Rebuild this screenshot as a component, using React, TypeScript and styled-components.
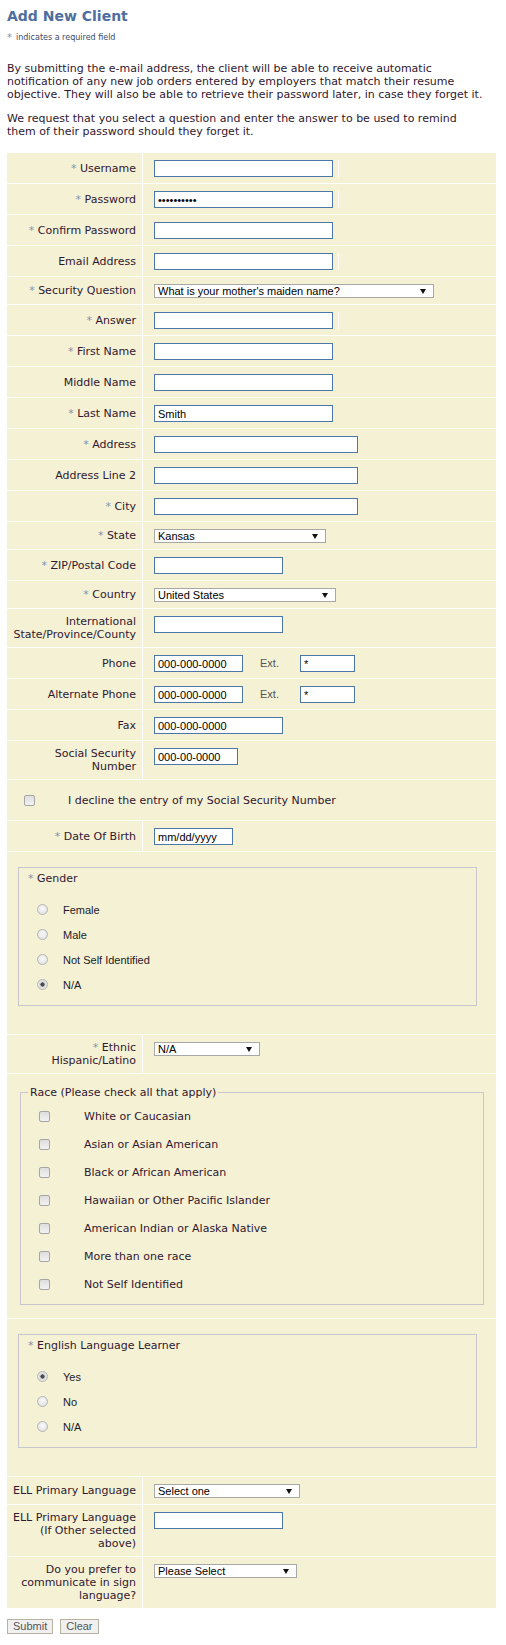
import React from "react";
import styled, { createGlobalStyle } from "styled-components";

const BEIGE = "#f5f1d5";

const GlobalStyle = createGlobalStyle`
  html, body { margin: 0; padding: 0; background: #ffffff; }
  body {
    font-family: "DejaVu Sans", Verdana, sans-serif;
    font-size: 11px;
    color: #301830;
  }
  * { box-sizing: border-box; }
`;

const Page = styled.div`
  width: 506px;
  padding: 8px 10px 10px 7px;
`;

const Title = styled.h1`
  margin: 0;
  font-size: 14px;
  line-height: 17px;
  font-weight: bold;
  color: #4e6e9e;
`;

const RequiredNote = styled.div`
  margin-top: 7px;
  font-size: 8px;
  line-height: 12px;
  color: #3a4a6a;
  display: flex;
  align-items: center;
  gap: 4px;
`;

const Star = styled.span<{ $size?: number }>`
  color: #8393ad;
  font-size: ${(p) => (p.$size ? `${p.$size}px` : "inherit")};
`;

const Paragraph = styled.p<{ $top: number }>`
  margin: ${(p) => p.$top}px 0 0;
  line-height: 13px;
  max-width: 482px;
`;

const FormGrid = styled.div`
  margin-top: 14px;
  display: flex;
  flex-direction: column;
  gap: 1px;
  background: #ffffff;
  padding: 1px 0;
`;

const Row = styled.div`
  display: grid;
  grid-template-columns: 135px 1fr;
  column-gap: 1px;
`;

const LabelCell = styled.div`
  background: ${BEIGE};
  padding: 6px 6px 6px 2px;
  display: flex;
  align-items: center;
  justify-content: flex-end;
  text-align: right;
  line-height: 13px;
  white-space: nowrap;
`;

const LabelText = styled.span`
  display: block;
`;

const ValueCell = styled.div`
  background: ${BEIGE};
  padding: 7px 6px 6px 11px;
  display: flex;
  align-items: flex-start;
`;

const WideCell = styled.div<{ $h?: number }>`
  grid-column: 1 / -1;
  background: ${BEIGE};
  ${(p) => (p.$h ? `height: ${p.$h}px;` : "")}
`;

const DeclineLine = styled.label`
  height: 100%;
  display: flex;
  align-items: center;
  padding-left: 17px;
  gap: 33px;
`;

const TextBox = styled.input<{ $w: number }>`
  width: ${(p) => p.$w}px;
  height: 17px;
  margin: 0;
  border: 1px solid #4b77a9;
  border-radius: 0;
  background: #ffffff;
  padding: 0 3px;
  font: 11px "Liberation Sans", Arial, sans-serif;
  color: #000000;
  outline: none;
`;

const HintBar = styled.span`
  width: 1px;
  height: 17px;
  margin-left: 5px;
  background: #ffffff;
  opacity: 0.9;
`;

const SelectBox = styled.div<{ $w: number }>`
  width: ${(p) => p.$w}px;
  height: 14px;
  border: 1px solid #a8a8a8;
  background: #ffffff;
  display: flex;
  align-items: center;
  justify-content: space-between;
  padding: 0 7px 0 3px;
  font: 11px/12px "Liberation Sans", Arial, sans-serif;
  color: #000000;
  white-space: nowrap;
  overflow: hidden;
`;

const Arrow = styled.span`
  width: 0;
  height: 0;
  border-left: 3px solid transparent;
  border-right: 3px solid transparent;
  border-top: 5px solid #111111;
  flex: none;
`;

const ExtLabel = styled.span`
  margin: 0 21px 0 17px;
  font: 11px/17px "Liberation Sans", Arial, sans-serif;
  color: #555555;
`;

const CheckBox = styled.input.attrs({ type: "checkbox" })`
  appearance: none;
  -webkit-appearance: none;
  width: 11px;
  height: 11px;
  margin: 0;
  flex: none;
  border: 1px solid #a6a6a6;
  border-radius: 2px;
  background: linear-gradient(#dedede, #f2f2f2);
`;

const Radio = styled.input.attrs({ type: "radio" })`
  appearance: none;
  -webkit-appearance: none;
  width: 11px;
  height: 11px;
  margin: 0;
  flex: none;
  border: 1px solid #b4b4b4;
  border-radius: 50%;
  background: radial-gradient(circle at 50% 40%, #fafafa, #dcdcdc);
  &:checked {
    background: radial-gradient(circle, #4a4a4a 0 1.8px, #dadada 2.4px, #f2f2f2 100%);
  }
`;

const GroupBox = styled.div`
  margin: 15px 19px 28px 11px;
  border: 1px solid #c6c6cc;
  padding: 4px 9px 8px;
`;

const GroupTitle = styled.div`
  line-height: 13px;
`;

const OptionList = styled.div`
  margin-top: 12px;
  padding-left: 9px;
  display: flex;
  flex-direction: column;
`;

const RadioOption = styled.label`
  height: 25px;
  display: flex;
  align-items: center;
  gap: 15px;
  font: 11px "Liberation Sans", Arial, sans-serif;
  color: #1a1a2a;
`;

const RaceSet = styled.fieldset`
  margin: 12px 12px 13px 13px;
  border: 1px solid #c6c6cc;
  padding: 0 0 6px 7px;
  min-width: 0;
`;

const RaceLegend = styled.legend`
  padding: 0 2px;
  line-height: 13px;
`;

const CheckList = styled.div`
  margin-top: 3px;
  padding-left: 11px;
  display: flex;
  flex-direction: column;
`;

const CheckOption = styled.label`
  height: 28px;
  display: flex;
  align-items: center;
  gap: 34px;
`;

const ButtonBar = styled.div`
  margin-top: 10px;
  display: flex;
  gap: 7px;
`;

const Button = styled.button`
  height: 15px;
  margin: 0;
  padding: 0 5px;
  border: 1px solid #b9b2a2;
  border-radius: 0;
  background: #f0f0f0;
  font: 11px/13px "Liberation Sans", Arial, sans-serif;
  color: #555555;
`;

type FieldRowProps = {
  label: React.ReactNode;
  required?: boolean;
  children: React.ReactNode;
};

function FieldRow({ label, required, children }: FieldRowProps) {
  return (
    <Row>
      <LabelCell>
        <LabelText>
          {required && <Star>* </Star>}
          {label}
        </LabelText>
      </LabelCell>
      <ValueCell>{children}</ValueCell>
    </Row>
  );
}

function Select({ w, value }: { w: number; value: string }) {
  return (
    <SelectBox $w={w} role="combobox">
      <span>{value}</span>
      <Arrow />
    </SelectBox>
  );
}

const genders = ["Female", "Male", "Not Self Identified", "N/A"];
const races = [
  "White or Caucasian",
  "Asian or Asian American",
  "Black or African American",
  "Hawaiian or Other Pacific Islander",
  "American Indian or Alaska Native",
  "More than one race",
  "Not Self Identified",
];
const ellOptions = ["Yes", "No", "N/A"];

export default function App() {
  return (
    <Page>
      <GlobalStyle />
      <Title>Add New Client</Title>
      <RequiredNote>
        <Star $size={10}>*</Star>
        <span>indicates a required field</span>
      </RequiredNote>
      <Paragraph $top={18}>
        By submitting the e-mail address, the client will be able to receive automatic
        notification of any new job orders entered by employers that match their resume
        objective. They will also be able to retrieve their password later, in case they forget it.
      </Paragraph>
      <Paragraph $top={11}>
        We request that you select a question and enter the answer to be used to remind
        <br />
        them of their password should they forget it.
      </Paragraph>

      <FormGrid>
        <FieldRow label="Username" required>
          <TextBox $w={179} />
          <HintBar />
        </FieldRow>
        <FieldRow label="Password" required>
          <TextBox $w={179} defaultValue={"\u2022\u2022\u2022\u2022\u2022\u2022\u2022\u2022\u2022\u2022"} />
          <HintBar />
        </FieldRow>
        <FieldRow label="Confirm Password" required>
          <TextBox $w={179} />
        </FieldRow>
        <FieldRow label="Email Address">
          <TextBox $w={179} />
          <HintBar />
        </FieldRow>
        <FieldRow label="Security Question" required>
          <Select w={280} value="What is your mother's maiden name?" />
        </FieldRow>
        <FieldRow label="Answer" required>
          <TextBox $w={179} />
          <HintBar />
        </FieldRow>
        <FieldRow label="First Name" required>
          <TextBox $w={179} />
        </FieldRow>
        <FieldRow label="Middle Name">
          <TextBox $w={179} />
        </FieldRow>
        <FieldRow label="Last Name" required>
          <TextBox $w={179} defaultValue="Smith" />
        </FieldRow>
        <FieldRow label="Address" required>
          <TextBox $w={204} />
        </FieldRow>
        <FieldRow label="Address Line 2">
          <TextBox $w={204} />
        </FieldRow>
        <FieldRow label="City" required>
          <TextBox $w={204} />
        </FieldRow>
        <FieldRow label="State" required>
          <Select w={172} value="Kansas" />
        </FieldRow>
        <FieldRow label="ZIP/Postal Code" required>
          <TextBox $w={129} />
        </FieldRow>
        <FieldRow label="Country" required>
          <Select w={182} value="United States" />
        </FieldRow>
        <FieldRow
          label={
            <>
              International
              <br />
              State/Province/County
            </>
          }
        >
          <TextBox $w={129} />
        </FieldRow>
        <FieldRow label="Phone">
          <TextBox $w={89} defaultValue="000-000-0000" />
          <ExtLabel>Ext.</ExtLabel>
          <TextBox $w={55} defaultValue="*" />
        </FieldRow>
        <FieldRow label="Alternate Phone">
          <TextBox $w={89} defaultValue="000-000-0000" />
          <ExtLabel>Ext.</ExtLabel>
          <TextBox $w={55} defaultValue="*" />
        </FieldRow>
        <FieldRow label="Fax">
          <TextBox $w={129} defaultValue="000-000-0000" />
        </FieldRow>
        <FieldRow
          label={
            <>
              Social Security
              <br />
              Number
            </>
          }
        >
          <TextBox $w={84} defaultValue="000-00-0000" />
        </FieldRow>
        <Row>
          <WideCell $h={40}>
            <DeclineLine>
              <CheckBox />
              <span>I decline the entry of my Social Security Number</span>
            </DeclineLine>
          </WideCell>
        </Row>
        <FieldRow label="Date Of Birth" required>
          <TextBox $w={79} defaultValue="mm/dd/yyyy" />
        </FieldRow>
        <Row>
          <WideCell>
            <GroupBox>
              <GroupTitle>
                <Star>* </Star>Gender
              </GroupTitle>
              <OptionList>
                {genders.map((g) => (
                  <RadioOption key={g}>
                    <Radio name="gender" defaultChecked={g === "N/A"} />
                    <span>{g}</span>
                  </RadioOption>
                ))}
              </OptionList>
            </GroupBox>
          </WideCell>
        </Row>
        <FieldRow
          required
          label={
            <>
              Ethnic
              <br />
              Hispanic/Latino
            </>
          }
        >
          <Select w={106} value="N/A" />
        </FieldRow>
        <Row>
          <WideCell>
            <RaceSet>
              <RaceLegend>Race (Please check all that apply)</RaceLegend>
              <CheckList>
                {races.map((r) => (
                  <CheckOption key={r}>
                    <CheckBox />
                    <span>{r}</span>
                  </CheckOption>
                ))}
              </CheckList>
            </RaceSet>
          </WideCell>
        </Row>
        <Row>
          <WideCell>
            <GroupBox>
              <GroupTitle>
                <Star>* </Star>English Language Learner
              </GroupTitle>
              <OptionList>
                {ellOptions.map((o) => (
                  <RadioOption key={o}>
                    <Radio name="ell" defaultChecked={o === "Yes"} />
                    <span>{o}</span>
                  </RadioOption>
                ))}
              </OptionList>
            </GroupBox>
          </WideCell>
        </Row>
        <FieldRow label="ELL Primary Language">
          <Select w={146} value="Select one" />
        </FieldRow>
        <FieldRow
          label={
            <>
              ELL Primary Language
              <br />
              (If Other selected
              <br />
              above)
            </>
          }
        >
          <TextBox $w={129} />
        </FieldRow>
        <FieldRow
          label={
            <>
              Do you prefer to
              <br />
              communicate in sign
              <br />
              language?
            </>
          }
        >
          <Select w={143} value="Please Select" />
        </FieldRow>
      </FormGrid>

      <ButtonBar>
        <Button type="button">Submit</Button>
        <Button type="button">Clear</Button>
      </ButtonBar>
    </Page>
  );
}
